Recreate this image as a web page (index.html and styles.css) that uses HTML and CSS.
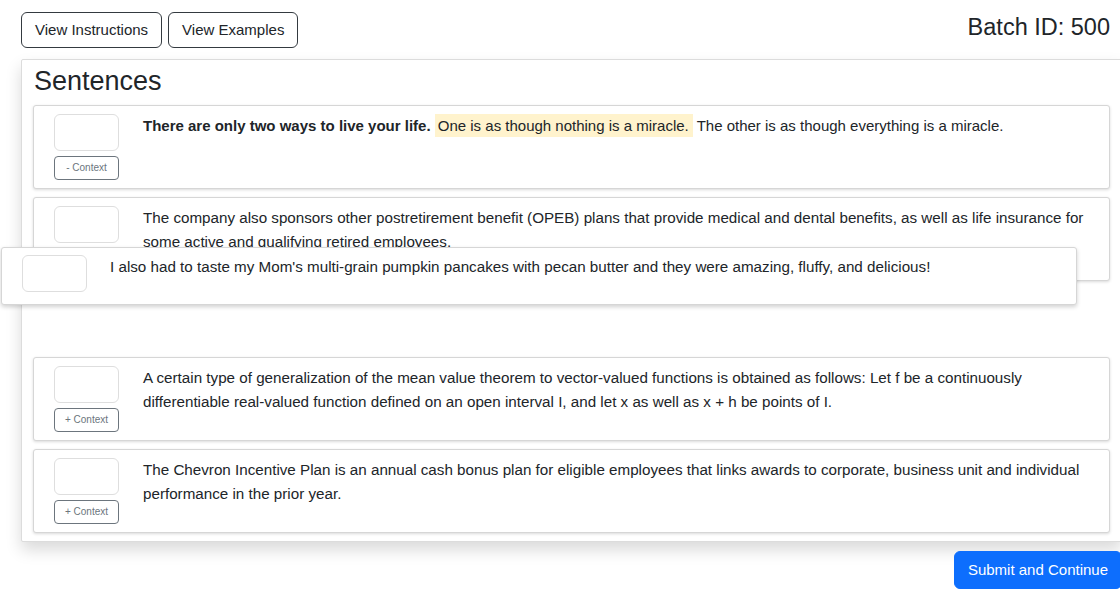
FILE: index.html
```html
<!DOCTYPE html>
<html lang="en">
<head>
<meta charset="utf-8">
<title>Sentences</title>
<link rel="stylesheet" href="styles.css">
</head>
<body>
<div class="page">
  <div class="topbar">
    <div class="top-buttons">
      <button class="btn-outline">View Instructions</button>
      <button class="btn-outline">View Examples</button>
    </div>
    <div class="batch">Batch ID: 500</div>
  </div>

  <div class="panel">
    <h2 class="panel-title">Sentences</h2>
    <div class="list">
      <div class="item item-context">
        <div class="ctrl"><div class="box"></div><button class="ctx">- Context</button></div>
        <p class="text"><b>There are only two ways to live your life.</b> <span class="hl">One is as though nothing is a miracle.</span> The other is as though everything is a miracle.</p>
      </div>
      <div class="item">
        <div class="ctrl"><div class="box"></div><button class="ctx">+ Context</button></div>
        <p class="text">The company also sponsors other postretirement benefit (OPEB) plans that provide medical and dental benefits, as well as life insurance for some active and qualifying retired employees.</p>
      </div>
      <div class="placeholder"></div>
      <div class="item">
        <div class="ctrl"><div class="box"></div><button class="ctx">+ Context</button></div>
        <p class="text">A certain type of generalization of the mean value theorem to vector-valued functions is obtained as follows: Let f be a continuously differentiable real-valued function defined on an open interval I, and let x as well as x + h be points of I.</p>
      </div>
      <div class="item">
        <div class="ctrl"><div class="box"></div><button class="ctx">+ Context</button></div>
        <p class="text">The Chevron Incentive Plan is an annual cash bonus plan for eligible employees that links awards to corporate, business unit and individual performance in the prior year.</p>
      </div>
    </div>
  </div>

  <div class="actions">
    <button class="btn-primary">Submit and Continue</button>
  </div>
</div>

<div class="drag-ghost">
  <div class="box"></div>
  <p class="text">I also had to taste my Mom's multi-grain pumpkin pancakes with pecan butter and they were amazing, fluffy, and delicious!</p>
</div>
</body>
</html>
```

FILE: styles.css
```css
html, body {
  margin: 0;
  padding: 0;
  overflow: hidden;
  background: #fff;
}

body {
  font-family: "Liberation Sans", Arial, sans-serif;
  font-size: 15px;
  line-height: 24px;
  color: #212529;
  width: 1120px;
  height: 589px;
  position: relative;
}

.page {
  margin-left: 21px;
  width: 1101px;
  padding-top: 12px;
}

.topbar {
  display: flex;
  justify-content: space-between;
  align-items: flex-start;
  padding-right: 12px;
  margin-bottom: 11px;
}

.top-buttons {
  display: flex;
  gap: 6px;
}

.btn-outline {
  font-family: inherit;
  font-size: 15px;
  line-height: 24px;
  color: #212529;
  background: #fff;
  border: 1px solid #343a40;
  border-radius: 6px;
  padding: 5px 13px;
  margin: 0;
}

.batch {
  font-size: 23.5px;
  line-height: 28px;
  margin-top: 1px;
  color: #212529;
}

.panel {
  border: 1px solid #dcdcdc;
  border-radius: 2px;
  box-shadow: 0 8px 16px rgba(0, 0, 0, 0.15);
  padding: 5px 11px 8px 11px;
  background: #fff;
}

.panel-title {
  font-size: 27px;
  line-height: 33px;
  font-weight: 500;
  margin: 0 0 7px 1px;
}

.list {
  display: flex;
  flex-direction: column;
  gap: 8px;
}

.item {
  display: flex;
  align-items: flex-start;
  gap: 24px;
  height: 84px;
  box-sizing: border-box;
  padding: 8px 20px 7px 20px;
  border: 1px solid #d6d6d6;
  border-radius: 3px;
  box-shadow: 0 1px 3px rgba(0, 0, 0, 0.15);
  background: #fff;
  overflow: hidden;
}

.ctrl {
  display: flex;
  flex-direction: column;
  gap: 5px;
  flex: 0 0 auto;
}

.box {
  width: 65px;
  height: 37px;
  box-sizing: border-box;
  border: 1px solid #dedede;
  border-radius: 6px;
  background: #fff;
  flex: 0 0 auto;
}

.ctx {
  width: 65px;
  height: 24px;
  box-sizing: border-box;
  font-family: inherit;
  font-size: 10px;
  line-height: 14px;
  color: #6c757d;
  background: #fff;
  border: 1px solid #6c757d;
  border-radius: 4px;
  padding: 0;
  margin: 0;
}

.text {
  margin: 0;
  flex: 1 1 auto;
  font-size: 15.2px;
}

.item-context .text {
  font-size: 15px;
}

.hl {
  background: #fff3cd;
  padding: 3px 4px 3px 3px;
}

.placeholder {
  height: 60px;
}

.actions {
  display: flex;
  justify-content: flex-end;
  margin-top: 9px;
}

.btn-primary {
  font-family: inherit;
  font-size: 15px;
  line-height: 24px;
  color: #fff;
  background: #0d6efd;
  border: 1px solid #0d6efd;
  border-radius: 6px;
  padding: 6px 13px;
  margin: 0;
}

.drag-ghost {
  position: absolute;
  left: 1px;
  top: 247px;
  width: 1076px;
  height: 58px;
  box-sizing: border-box;
  display: flex;
  align-items: flex-start;
  gap: 23px;
  padding: 7px 20px 0 20px;
  border: 1px solid #d6d6d6;
  border-radius: 3px;
  background: #fff;
  box-shadow: 0 2px 4px rgba(0, 0, 0, 0.18);
}
```
